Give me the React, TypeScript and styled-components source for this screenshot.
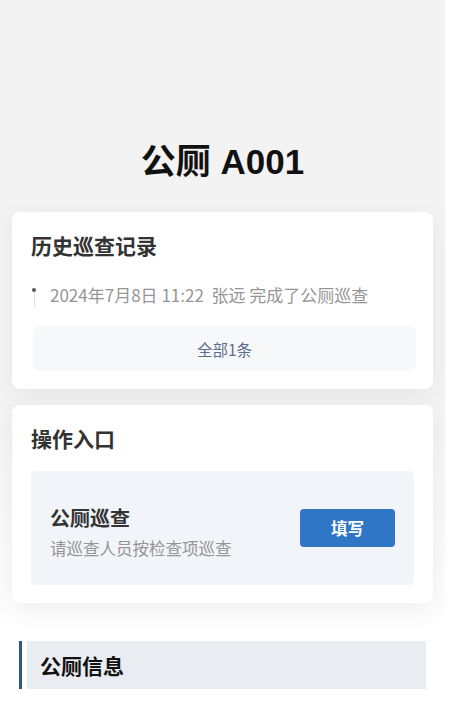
import React, { FC } from 'react';
import styled, { createGlobalStyle } from 'styled-components';

const colors = {
  pageTop: '#f3f3f3',
  title: '#111111',
  heading: '#333333',
  muted: '#959595',
  link: '#5b6b8c',
  soft: '#f7f8fa',
  panel: '#f1f4f8',
  primary: '#2f77c6',
  sectionBg: '#e9ecf1',
  sectionBar: '#2c5a86',
};

type Record = {
  time: string;
  user: string;
  action: string;
};

const records: Record[] = [{ time: '2024年7月8日 11:22', user: '张远', action: '完成了公厕巡查' }];

const App: FC = () => (
  <>
    <GlobalStyle />
    <Root>
      <Title>公厕 A001</Title>

      <Card>
        <CardTitle>历史巡查记录</CardTitle>
        <Timeline>
          {records.map((item) => (
            <TimelineItem key={item.time}>
              <Dot />
              <RecordText>
                {item.time}&nbsp; {item.user} {item.action}
              </RecordText>
            </TimelineItem>
          ))}
        </Timeline>
        <MoreButton>全部{records.length}条</MoreButton>
      </Card>

      <Card>
        <CardTitle>操作入口</CardTitle>
        <Entry>
          <EntryInfo>
            <EntryName>公厕巡查</EntryName>
            <EntryDesc>请巡查人员按检查项巡查</EntryDesc>
          </EntryInfo>
          <FillButton>填写</FillButton>
        </Entry>
      </Card>

      <Section>
        <SectionTitle>公厕信息</SectionTitle>
      </Section>
    </Root>
  </>
);

export default App;

const GlobalStyle = createGlobalStyle`
  html, body {
    margin: 0;
    padding: 0;
    background: #ffffff;
  }

  body {
    font-family: "Noto Sans CJK SC", "Noto Sans", sans-serif;
  }
`;

const Root = styled.div`
  display: flex;
  flex-direction: column;
  width: 445px;
  min-height: 708px;
  padding: 0 12px;
  box-sizing: border-box;
  background: linear-gradient(${colors.pageTop} 0, ${colors.pageTop} 400px, #ffffff 640px);
`;

const Title = styled.h1`
  margin: 139px 0 27px;
  text-align: center;
  font-family: "Liberation Sans", "Noto Sans CJK SC", sans-serif;
  font-size: 35px;
  line-height: 46px;
  font-weight: 700;
  color: ${colors.title};
`;

const Card = styled.div`
  display: flex;
  flex-direction: column;
  margin-bottom: 16px;
  padding: 18px 19px 18px;
  background: #ffffff;
  border-radius: 8px;
  box-shadow: 0 6px 24px rgba(0, 0, 0, 0.06);
`;

const CardTitle = styled.h2`
  margin: 0;
  font-size: 21px;
  line-height: 30px;
  font-weight: 700;
  color: ${colors.heading};
`;

const Timeline = styled.div`
  display: flex;
  flex-direction: column;
  margin-top: 18px;
`;

const TimelineItem = styled.div`
  position: relative;
  display: flex;
  align-items: center;
  padding-left: 19px;
  height: 34px;
`;

const Dot = styled.span`
  position: absolute;
  left: 1px;
  top: 10px;
  width: 4px;
  height: 4px;
  border-radius: 50%;
  background: #555555;

  &::after {
    content: '';
    position: absolute;
    left: 1.5px;
    top: 5px;
    width: 1px;
    height: 14px;
    background: #dddddd;
  }
`;

const RecordText = styled.span`
  font-size: 17px;
  line-height: 24px;
  color: ${colors.muted};
  white-space: nowrap;
`;

const MoreButton = styled.button`
  margin: 14px 0 0 2px;
  height: 45px;
  width: 383px;
  border: none;
  border-radius: 6px;
  background: ${colors.soft};
  font-family: inherit;
  font-size: 15.5px;
  color: ${colors.link};
  cursor: pointer;
`;

const Entry = styled.div`
  display: flex;
  align-items: center;
  justify-content: space-between;
  margin-top: 18px;
  height: 114px;
  padding: 0 19px;
  background: ${colors.panel};
  border-radius: 4px;
`;

const EntryInfo = styled.div`
  display: flex;
  flex-direction: column;
  gap: 6px;
  padding-top: 8px;
`;

const EntryName = styled.span`
  font-size: 20px;
  line-height: 26px;
  font-weight: 700;
  color: ${colors.heading};
`;

const EntryDesc = styled.span`
  font-size: 16.5px;
  line-height: 22px;
  color: ${colors.muted};
`;

const FillButton = styled.button`
  width: 95px;
  height: 38px;
  border: none;
  border-radius: 4px;
  background: ${colors.primary};
  font-family: inherit;
  font-size: 16.5px;
  font-weight: 700;
  color: #ffffff;
  cursor: pointer;
`;

const Section = styled.div`
  display: flex;
  align-items: center;
  margin: 22px 7px 0;
  height: 48px;
  padding-left: 18px;
  background: ${colors.sectionBg};
  border-left: 3px solid ${colors.sectionBar};
  box-shadow: inset 5px 0 0 #ffffff;
`;

const SectionTitle = styled.h3`
  margin: 0;
  font-size: 21px;
  font-weight: 700;
  color: ${colors.title};
`;
